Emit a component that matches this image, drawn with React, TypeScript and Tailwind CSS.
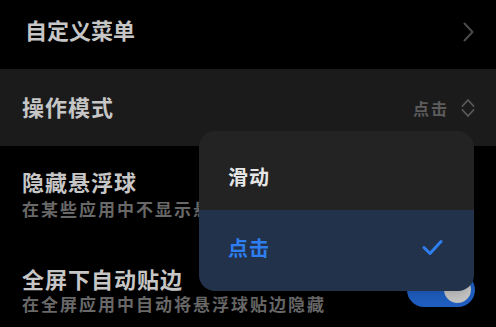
import { useState } from "react";

const font = { fontFamily: '"Noto Sans CJK SC", "Noto Sans", sans-serif' };

export default function App() {
  const [mode, setMode] = useState("点击");
  const [autoEdge, setAutoEdge] = useState(true);

  return (
    <div className="relative h-[327px] w-[496px] overflow-hidden bg-black" style={font}>
      {/* 自定义菜单 */}
      <div className="flex h-[69px] items-center justify-between pb-[12px] pl-[25px] pr-[22px]">
        <span className="text-[22px] font-bold leading-[28px] tracking-[0px] text-[#c6c6c6]">自定义菜单</span>
        <svg width="11" height="20" viewBox="0 0 11 20" fill="none" className="mt-[6px]">
          <path d="M1.5 1.5 L9.5 10 L1.5 18.5" stroke="#4a4a4a" strokeWidth="2" strokeLinecap="round" strokeLinejoin="round" />
        </svg>
      </div>

      {/* 操作模式 */}
      <div className="flex h-[77px] items-center justify-between bg-[#1b1b1b] pl-[22px] pr-[21px]">
        <span className="mb-[4px] text-[22px] font-bold leading-[28px] tracking-[1px] text-[#c6c6c6]">操作模式</span>
        <div className="flex items-center gap-[12px]">
          <span className="text-[16px] font-bold leading-[22px] tracking-[2px] text-[#5c5c5c]">{mode}</span>
          <svg width="14" height="20" viewBox="0 0 14 20" fill="none">
            <path d="M1.5 8 L7 2 L12.5 8" stroke="#5a5a5a" strokeWidth="1.8" strokeLinecap="round" strokeLinejoin="round" />
            <path d="M1.5 12 L7 18 L12.5 12" stroke="#5a5a5a" strokeWidth="1.8" strokeLinecap="round" strokeLinejoin="round" />
          </svg>
        </div>
      </div>

      {/* 隐藏悬浮球 */}
      <div className="flex flex-col pl-[22px] pr-[21px] pt-[21px]">
        <span className="text-[22px] font-bold leading-[28px] tracking-[1px] text-[#c6c6c6]">隐藏悬浮球</span>
        <span className="mt-[3px] whitespace-nowrap text-[17px] font-semibold leading-[22px] tracking-[2px] text-[#686868]">
          在某些应用中不显示悬浮球
        </span>
      </div>

      {/* 全屏下自动贴边 */}
      <div className="mt-[44px] flex items-center justify-between pl-[22px] pr-[21px]">
        <div className="flex flex-col">
          <span className="text-[22px] font-bold leading-[28px] tracking-[1px] text-[#c6c6c6]">全屏下自动贴边</span>
          <span className="mt-[1px] whitespace-nowrap text-[17px] font-semibold leading-[22px] tracking-[2px] text-[#686868]">
            在全屏应用中自动将悬浮球贴边隐藏
          </span>
        </div>
        <button
          onClick={() => setAutoEdge(!autoEdge)}
          className={`flex h-[34px] w-[68px] items-center rounded-full px-[4px] ${autoEdge ? "justify-end bg-[#1f5fc2]" : "justify-start bg-[#3a3a3a]"}`}
        >
          <span className="h-[27px] w-[27px] rounded-full bg-[#c6c6c6]" />
        </button>
      </div>

      {/* 下拉菜单 */}
      <div className="absolute left-[199px] top-[131px] w-[275px] overflow-hidden rounded-[16px] shadow-lg">
        {["滑动", "点击"].map((item) => {
          const active = item === mode;
          return (
            <div
              key={item}
              onClick={() => setMode(item)}
              className={`flex items-center justify-between pl-[29px] pr-[31px] ${item === "滑动" ? "h-[79px] pt-[12px]" : "h-[81px] pb-[6px]"} ${active ? "bg-[#21324a]" : "bg-[#232323]"}`}
            >
              <span className={`text-[20px] font-bold leading-[26px] tracking-[1px] ${active ? "text-[#2f7ef0]" : "text-[#e6e6e6]"}`}>
                {item}
              </span>
              {active && (
                <svg width="21" height="17" viewBox="0 0 21 17" fill="none">
                  <path d="M2 8.5 L8 14.5 L19 2.5" stroke="#2f7ef0" strokeWidth="3" strokeLinecap="round" strokeLinejoin="round" />
                </svg>
              )}
            </div>
          );
        })}
      </div>
    </div>
  );
}
